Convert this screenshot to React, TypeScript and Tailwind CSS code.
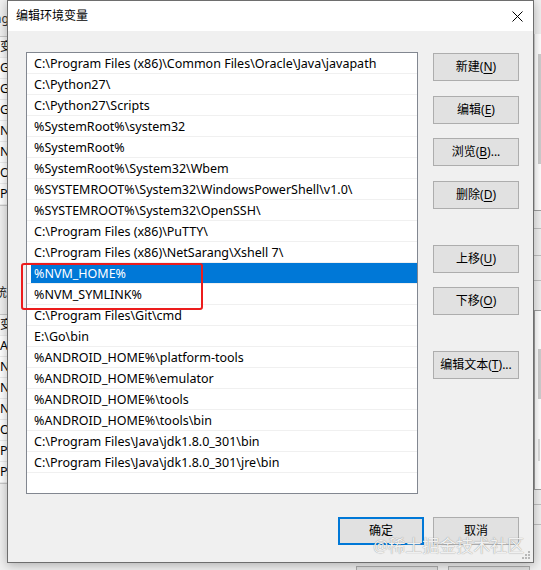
const paths = [
  "C:\\Program Files (x86)\\Common Files\\Oracle\\Java\\javapath",
  "C:\\Python27\\",
  "C:\\Python27\\Scripts",
  "%SystemRoot%\\system32",
  "%SystemRoot%",
  "%SystemRoot%\\System32\\Wbem",
  "%SYSTEMROOT%\\System32\\WindowsPowerShell\\v1.0\\",
  "%SYSTEMROOT%\\System32\\OpenSSH\\",
  "C:\\Program Files (x86)\\PuTTY\\",
  "C:\\Program Files (x86)\\NetSarang\\Xshell 7\\",
  "%NVM_HOME%",
  "%NVM_SYMLINK%",
  "C:\\Program Files\\Git\\cmd",
  "E:\\Go\\bin",
  "%ANDROID_HOME%\\platform-tools",
  "%ANDROID_HOME%\\emulator",
  "%ANDROID_HOME%\\tools",
  "%ANDROID_HOME%\\tools\\bin",
  "C:\\Program Files\\Java\\jdk1.8.0_301\\bin",
  "C:\\Program Files\\Java\\jdk1.8.0_301\\jre\\bin",
];

const SELECTED = 10;

// rows of the parent "环境变量" window that peek out on the left
const userVars = ["变", "GO", "GO", "GO", "NV", "NV", "On", "Pa"];
const sysVars = ["变", "AN", "NU", "NV", "NV", "OS", "Pa", "PA"];

function WinButton({ label, keyChar, tail = "", primary, className = "" }: {
  label: string; keyChar: string; tail?: string; primary?: boolean; className?: string;
}) {
  return (
    <button
      className={`flex h-[28px] w-[86px] items-center justify-center bg-[#e1e1e1] text-[12px] text-black ${
        primary ? "border-2 border-[#0078d7]" : "border border-[#adadad]"
      } ${className}`}
    >
      {label}
      {keyChar && (
        <>
          (<span className="underline underline-offset-2">{keyChar}</span>)
        </>
      )}
      {tail}
    </button>
  );
}

function VarList({ rows }: { rows: string[] }) {
  return (
    <div className="border-y border-[#c8c8c8] bg-white">
      {rows.map((v, i) => (
        <div key={i} className={`flex h-[21px] justify-end border-b border-[#ececec] pr-[-2px] ${i === 0 ? "bg-[#f7f7f7]" : ""}`}>
          <span className="mr-[-7px] w-[16px] pt-[2px] text-[12.5px] leading-[16px] text-black">{v}</span>
        </div>
      ))}
    </div>
  );
}

function ParentWindow() {
  return (
    <div className="absolute inset-0">
      {/* left column of the parent dialog, mostly hidden under the editor */}
      <div className="absolute left-[-200px] top-0 flex w-[209px] flex-col">
        <div className="flex h-[36px] justify-end pt-[10px] text-[12px] text-[#333]">
          <span className="mr-[-6px]">Ongy</span>
        </div>
        <VarList rows={userVars} />
        <div className="flex h-[108px] items-end justify-end pb-[12px] text-[12px] text-[#222]">
          <span className="mr-[-22px]">系统变量</span>
        </div>
        <VarList rows={sysVars} />
      </div>

      {/* right column: list edges and scroll bars */}
      <div className="absolute left-[534px] top-[34px] flex w-[20px] flex-col">
        <div className="h-[176px] border-l border-[#d4d4d4] bg-white pl-[3px] pt-[20px]">
          <div className="h-[110px] w-[5px] bg-[#cdcdcd]" />
        </div>
        <div className="h-[18px] border-t border-[#a0a0a0]" />
        <div className="h-[27px] border-t border-[#c0c0c0]" />
        <div className="h-[25px] border-t border-[#c0c0c0]" />
        <div className="h-[30px] border-t border-[#c0c0c0]" />
        <div className="h-[180px] border-y border-l border-[#a0a0a0] bg-white pl-[3px] pt-[38px]">
          <div className="h-[50px] w-[5px] bg-[#cdcdcd]" />
          <div className="mt-[40px] h-[22px] w-[2px] bg-[#dcdcdc]" />
        </div>
        <div className="mt-[14px] h-[20px] border-t border-[#c0c0c0]" />
        <div className="h-[20px] border-t border-[#c0c0c0]" />
      </div>

      {/* parent dialog's buttons below */}
      <div className="absolute left-[356px] top-[566px] flex gap-[10px]">
        <div className="h-[20px] w-[82px] border border-[#adadad] bg-[#e1e1e1]" />
        <div className="h-[20px] w-[82px] border border-[#adadad] bg-[#e1e1e1]" />
      </div>
    </div>
  );
}

function ResizeGrip() {
  return (
    <svg width="8" height="8" viewBox="0 0 8 8" className="absolute bottom-[3px] right-[3px] fill-[#b8b8b8]">
      <rect x="6" y="0" width="2" height="2" />
      <rect x="3" y="3" width="2" height="2" />
      <rect x="6" y="3" width="2" height="2" />
      <rect x="0" y="6" width="2" height="2" />
      <rect x="3" y="6" width="2" height="2" />
      <rect x="6" y="6" width="2" height="2" />
    </svg>
  );
}

function EditEnvDialog() {
  return (
    <div className="absolute left-[7px] top-0 flex h-[563px] w-[527px] flex-col border border-[#6e6e6e] bg-[#f0f0f0] shadow-[0_2px_10px_rgba(0,0,0,0.28)]">
      {/* title bar */}
      <div className="flex h-[30px] shrink-0 items-center justify-between bg-white pl-[8px] pr-[10px]">
        <span className="text-[12px] text-black">编辑环境变量</span>
        <svg width="11" height="11" viewBox="0 0 11 11" className="text-black">
          <path d="M0.5 0.5 L10.5 10.5 M10.5 0.5 L0.5 10.5" stroke="currentColor" strokeWidth="1" />
        </svg>
      </div>

      <div className="flex flex-col pl-[18px] pr-[14px] pt-[21px]">
        <div className="flex gap-[15px]">
          {/* path list */}
          <div className="h-[442px] w-[392px] border border-[#828790] bg-white">
            {paths.map((p, i) => (
              <div key={i} className="flex h-[21px] border-b border-[#f0f0f0] pl-[4px]">
                <div className={`flex-1 pl-[3px] pt-[3px] text-[12.5px] leading-[16px] ${i === SELECTED ? "bg-[#0078d7] text-white" : "text-black"}`}>
                  {p}
                </div>
              </div>
            ))}
          </div>

          <div className="flex flex-col">
            <WinButton label="新建" keyChar="N" className="mt-[1px]" />
            <WinButton label="编辑" keyChar="E" className="mt-[15px]" />
            <WinButton label="浏览" keyChar="B" tail="..." className="mt-[14px]" />
            <WinButton label="删除" keyChar="D" className="mt-[15px]" />
            <WinButton label="上移" keyChar="U" className="mt-[36px]" />
            <WinButton label="下移" keyChar="O" className="mt-[14px]" />
            <WinButton label="编辑文本" keyChar="T" tail="..." className="mt-[36px]" />
          </div>
        </div>

        <div className="mt-[23px] flex justify-end gap-[9px]">
          <WinButton label="确定" keyChar="" primary />
          <WinButton label="取消" keyChar="" />
        </div>
      </div>

      {/* red annotation round the nvm entries */}
      <div className="absolute left-[13px] top-[262px] h-[47px] w-[182px] rounded-[3px] border-2 border-[#ec1c1c]" />

      <div className="pointer-events-none absolute left-[365px] top-[536px] text-[17px] leading-none text-[#f0f0f0] [text-shadow:0_0_1px_rgba(0,0,0,0.45)]">
        @稀土掘金技术社区
      </div>
      <ResizeGrip />
    </div>
  );
}

export default function App() {
  return (
    <div className="relative h-[570px] w-[541px] overflow-hidden bg-[#f0f0f0] font-['Noto_Sans','Noto_Sans_CJK_SC',sans-serif]">
      <ParentWindow />
      <EditEnvDialog />
    </div>
  );
}
